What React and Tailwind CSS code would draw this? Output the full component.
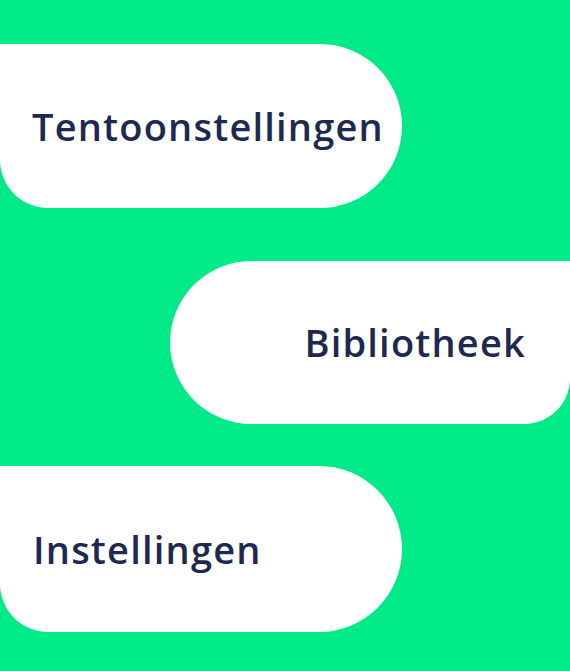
import React from "react";

const items = [
  { label: "Tentoonstellingen", side: "left" },
  { label: "Bibliotheek", side: "right" },
  { label: "Instellingen", side: "left" },
];

const App = () => {
  return (
    <div
      className="min-h-[671px] w-full bg-[#00eb88] pt-[44px] overflow-hidden"
      style={{ fontFamily: "'Open Sans', 'Noto Sans', sans-serif" }}
    >
      <div className="flex h-[164px] w-[402px] items-center rounded-r-[82px] rounded-bl-[48px] bg-white pl-[32px]">
        <span className="text-[38px] font-semibold text-[#1d2951] tracking-[1.2px]">
          {items[0].label}
        </span>
      </div>

      <div className="mt-[53px] ml-[170px] flex h-[163px] items-center justify-end rounded-l-[82px] rounded-br-[46px] bg-white pr-[44px]">
        <span className="text-[38px] font-semibold text-[#1d2951] tracking-[1.2px]">
          {items[1].label}
        </span>
      </div>

      <div className="mt-[42px] flex h-[166px] w-[402px] items-center rounded-r-[83px] rounded-bl-[48px] bg-white pl-[33px]">
        <span className="text-[38px] font-semibold text-[#1d2951] tracking-[1.2px]">
          {items[2].label}
        </span>
      </div>
    </div>
  );
};

export default App;
